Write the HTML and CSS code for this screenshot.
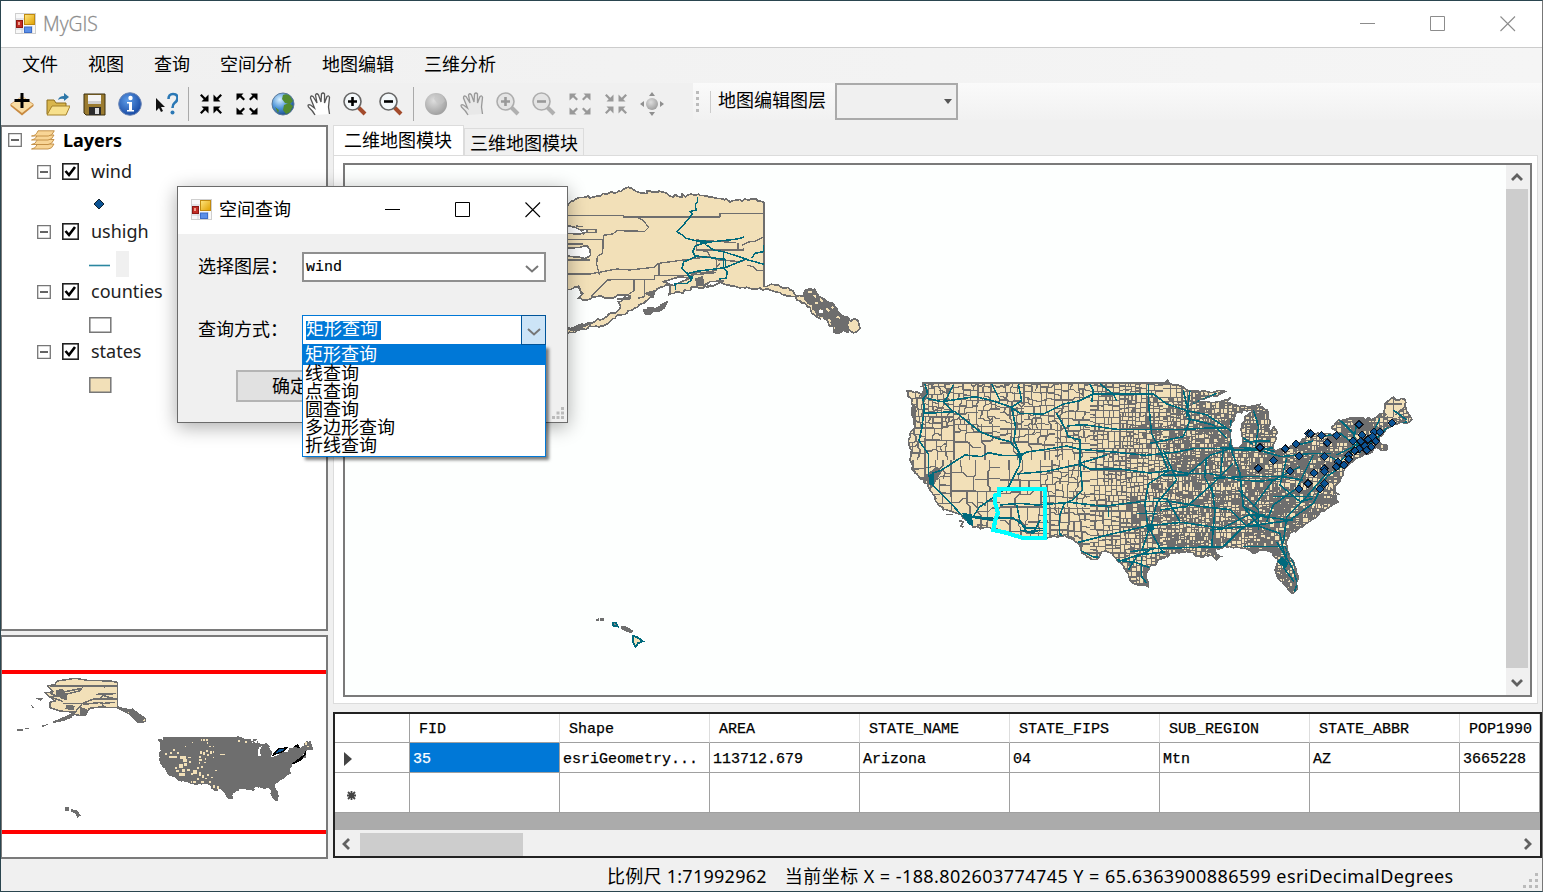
FILE: index.html
```html
<!DOCTYPE html>
<html lang="zh">
<head>
<meta charset="utf-8">
<title>MyGIS</title>
<link rel="stylesheet" href="styles.css">
</head>
<body>
<svg class="defs" width="0" height="0" aria-hidden="true">
  <defs>
    <linearGradient id="yel" x1="0" y1="0" x2="1" y2="1"><stop offset="0" stop-color="#ffe680"/><stop offset="1" stop-color="#e0a000"/></linearGradient>
    <radialGradient id="blue" cx=".4" cy=".35" r=".7"><stop offset="0" stop-color="#5c9ce8"/><stop offset="1" stop-color="#1546a0"/></radialGradient>
    <radialGradient id="sea" cx=".35" cy=".3" r=".8"><stop offset="0" stop-color="#d8f0ff"/><stop offset=".5" stop-color="#4d94d8"/><stop offset="1" stop-color="#123c78"/></radialGradient>
    <radialGradient id="grayball" cx=".4" cy=".35" r=".7"><stop offset="0" stop-color="#dedede"/><stop offset="1" stop-color="#9c9c9c"/></radialGradient>
    <symbol id="i-app" viewBox="0 0 21 21"><rect x=".5" y=".5" width="20" height="20" fill="#f8f8f8" stroke="#cfcfcf"/><path d="M1 6h8M7 15v5M17 13v7M1 16h8" stroke="#d0d0d8"/><rect x="9.500" y="1.500" width="10" height="10" fill="url(#yel)" stroke="#c08a10"/><rect x="1.500" y="7.500" width="6" height="7" fill="#c22d25" stroke="#8d1813"/><rect x="3" y="9" width="2" height="3" fill="#f0a090"/><rect x="9.500" y="14" width="7" height="5.500" fill="#5b8fe8" stroke="#3d6dc8"/></symbol>
    <symbol id="i-add" viewBox="0 0 24 24"><path d="M.5 12L12 4L23.500 12V14L12 23.500L.5 14Z" fill="#c88a40"/><path d="M1 12.500L12 4L23 12.500L12 21Z" fill="#f8dca4"/><path d="M12 1v15M4.500 8.500h15" stroke="#000" stroke-width="3"/></symbol>
    <symbol id="i-open" viewBox="0 0 24 24"><path d="M1 22V8h7l2 3h10v11z" fill="#d9b64c" stroke="#8c6c1c"/><path d="M1 23L6 14H24L20 23z" fill="#f7e08c" stroke="#a5822b"/><path d="M12 8q1-4 6-4V1l5 4-5 4V7q-3-1-6 1z" fill="#2d77a8"/></symbol>
    <symbol id="i-save" viewBox="0 0 24 24"><path d="M2 2h21v21H4l-2-2z" fill="#9a7b30" stroke="#3c300f"/><rect x="6" y="3" width="13" height="9" fill="#f4f4f4"/><path d="M6 9h13v3H6z" fill="#d0d0d0"/><rect x="7" y="15" width="12" height="8" fill="#2c2c2c"/><rect x="13" y="16" width="4" height="6" fill="#ddd"/></symbol>
    <symbol id="i-info" viewBox="0 0 24 24"><circle cx="12" cy="12" r="11.300" fill="url(#blue)" stroke="#6c86b5"/><circle cx="12.500" cy="6" r="2.200" fill="#fff"/><path d="M9 10h5v8h2v1.500H9V18h2v-6.500H9z" fill="#fff"/></symbol>
    <symbol id="i-help" viewBox="0 0 24 24"><path d="M2 6v13l3-3 2 4 2-1-2-4h4z" fill="#111"/><path d="M14.500 7q0-5 4.500-5t4.500 4q0 3-3 5-2 1.500-2 5" fill="none" stroke="#2b78b5" stroke-width="2.600"/><circle cx="18.500" cy="20.500" r="2" fill="#2b78b5"/></symbol>
    <symbol id="i-in" viewBox="0 0 24 24"><path d="M9.500 2.500v7h-7l2.200-2.200L1 3.600 2.600 2l3.700 3.700zM14.500 2.500v7h7l-2.200-2.200L23 3.600 21.400 2l-3.700 3.700zM9.500 21.500v-7h-7l2.200 2.200L1 20.400 2.600 22l3.700-3.700zM14.500 21.500v-7h7l-2.200 2.200L23 20.400 21.400 22l-3.700-3.700z" fill="currentColor"/></symbol>
    <symbol id="i-out" viewBox="0 0 24 24"><path d="M1.500 1.500h7L6.500 3.500 10 7 8.500 8.500 5 5.200 1.500 8.500zM22.500 1.500h-7l2 2L14 7l1.500 1.500L19 5.200 22.500 8.500zM1.500 22.500h7l-2-2L10 17l-1.500-1.500L5 18.800 1.500 15.500zM22.500 22.500h-7l2-2L14 17l1.500-1.500L19 18.800 22.500 15.500z" fill="currentColor"/></symbol>
    <symbol id="i-globe" viewBox="0 0 24 24"><circle cx="12" cy="12" r="11" fill="url(#sea)" stroke="#5a7898"/><path d="M12 3q4-2 7 1l3 5-3 3-5-1-3-4zM13 13l5-2 4 3-3 6-4 2-3-4zM4 15l4 3-1 3z" fill="#528b2e"/></symbol>
    <symbol id="i-globeg" viewBox="0 0 24 24"><circle cx="12" cy="12" r="11" fill="url(#grayball)"/><path d="M12 3q4-2 7 1l2 5-3 3-5-1-3-4z" fill="#c4c4c4" opacity=".6"/></symbol>
    <symbol id="i-hand" viewBox="0 0 24 24"><path d="M8 23Q6 19 1.500 15q-1.500-3 2-2l4 3L3.500 6q0-3 2.500-1.500L10 11 8.500 3q1-2.500 3 0L14 10l.5-8q1.500-2 3 0L17.500 11 20 4.500q2-1.500 2.500 1L21.500 15l1 7" fill="var(--palm)" stroke="currentColor" stroke-width="1.300"/></symbol>
    <symbol id="i-plus" viewBox="0 0 24 24"><path d="M15 15l7 7" stroke="var(--handle)" stroke-width="4"/><circle cx="9.500" cy="9.500" r="8.500" fill="var(--lens)" stroke="var(--rim)" stroke-width="1.600"/><path d="M9.500 5v9M5 9.500h9" stroke="currentColor" stroke-width="2.600"/></symbol>
    <symbol id="i-minus" viewBox="0 0 24 24"><path d="M15 15l7 7" stroke="var(--handle)" stroke-width="4"/><circle cx="9.500" cy="9.500" r="8.500" fill="var(--lens)" stroke="var(--rim)" stroke-width="1.600"/><path d="M5 9.500h9" stroke="currentColor" stroke-width="2.600"/></symbol>
    <symbol id="i-pan" viewBox="0 0 24 24"><circle cx="12" cy="12" r="6" fill="url(#grayball)"/><path d="M12 0l3 4H9zM12 24l3-4H9zM0 12l4-3v6zM24 12l-4-3v6z" fill="#8f8f8f"/></symbol>
    <symbol id="i-layers" viewBox="0 0 24 20"><g stroke="#c08a40" stroke-width=".9" fill="#f8d596"><path d="M.5 19q4 0 6-5h16.500q-2 5-6 5z"/><path d="M.5 14.500q4 0 6-5h16.500q-2 5-6 5z"/><path d="M.5 10q4 0 6-5h16.500q-2 5-6 5z"/><path d="M.5 6Q5 6 7 .8h16.300q-2 5.200-6 5.200z"/></g></symbol>
    <symbol id="i-box" viewBox="0 0 14 14"><path d="M.7.700h12.600v12.600H.700z" fill="#fff" stroke="#777" stroke-width="1.300"/><path d="M3 7h8" stroke="#222" stroke-width="1.400"/></symbol>
    <symbol id="i-check" viewBox="0 0 17 17"><rect x=".8" y=".8" width="15.400" height="15.400" fill="#fff" stroke="#222" stroke-width="1.600"/><path d="M3.500 8l3.500 4 6-8" fill="none" stroke="#000" stroke-width="2.600"/></symbol>
    <symbol id="i-min" viewBox="0 0 16 16"><path d="M0 7.500h15" stroke="currentColor"/></symbol>
    <symbol id="i-max" viewBox="0 0 16 16"><path d="M.5.500h14v14H.500z" fill="none" stroke="currentColor"/></symbol>
    <symbol id="i-close" viewBox="0 0 16 16"><path d="M.5.500l14.500 14.500M15 .5L.5 15" stroke="currentColor" stroke-width="1.100"/></symbol>
    <symbol id="i-down" viewBox="0 0 14 8"><path d="M1 1l6 5.500L13 1" fill="none" stroke="currentColor" stroke-width="2"/></symbol>
    <symbol id="i-arrow" viewBox="0 0 14 8"><path d="M2 1l5 5 5-5" fill="none" stroke="currentColor" stroke-width="2.800"/></symbol>
    <g id="w"><path d="M-14 0L0-14L14 0L0 14Z" fill="#0b0f18"/><path d="M-10 0L0-10L10 0L0 10Z" fill="#0b5394"/></g>
    <path id="usa" d="M98 40 L825 40 832 30 838 40 870 48 895 62 930 65 975 66 1005 65 985 75 940 88 900 102 930 96 960 97 1000 92 1022 82 1012 98 1040 106 1085 108 1110 103 1106 112 1132 120 1134 128 1100 124 1085 122 1060 120 1035 134 1024 158 1020 190 1022 222 1030 234 1045 235 1060 215 1053 180 1064 148 1080 128 1105 124 1133 132 1140 152 1134 172 1142 184 1152 168 1162 190 1158 208 1148 226 1150 240 1190 236 1220 222 1248 205 1250 190 1300 194 1342 192 1325 172 1345 150 1380 144 1450 147 1480 130 1486 100 1510 82 1518 90 1545 88 1548 115 1565 148 1550 160 1532 155 1505 168 1484 185 1468 200 1472 222 1490 224 1492 238 1476 242 1458 232 1440 250 1400 265 1374 286 1360 305 1350 335 1335 350 1338 380 1345 395 1320 410 1290 428 1260 454 1225 477 1197 495 1188 520 1196 550 1214 582 1225 625 1220 660 1205 670 1190 650 1165 625 1155 600 1160 585 1165 570 1140 545 1110 540 1090 550 1065 535 1020 530 975 535 978 550 990 560 980 570 965 556 930 560 890 545 850 550 820 565 780 590 770 612 774 650 735 642 720 630 710 605 685 575 665 550 635 545 625 565 605 568 575 550 570 525 540 505 525 497 485 500 405 508 315 478 250 472 240 460 215 435 185 425 160 420 130 375 115 350 75 310 60 270 65 240 55 210 60 190 75 170 68 140 65 100 50 62 80 66 98 74Z"/>
    <clipPath id="usclip"><use href="#usa"/></clipPath>
  </defs>
</svg>

<div class="window">
  <header class="titlebar">
    <svg class="app"><use href="#i-app"/></svg><span class="apptitle">MyGIS</span>
    <div class="controls"><svg><use href="#i-min"/></svg><svg><use href="#i-max"/></svg><svg><use href="#i-close"/></svg></div>
  </header>
  <nav class="menu"><span>文件</span><span>视图</span><span>查询</span><span>空间分析</span><span>地图编辑</span><span>三维分析</span></nav>
  <div class="toolbar">
    <div class="tools">
      <svg><use href="#i-add"/></svg><svg><use href="#i-open"/></svg><svg><use href="#i-save"/></svg><svg><use href="#i-info"/></svg><svg><use href="#i-help"/></svg>
      <i class="sep"></i>
      <svg><use href="#i-in"/></svg><svg><use href="#i-out"/></svg><svg><use href="#i-globe"/></svg><svg class="handc"><use href="#i-hand"/></svg><svg><use href="#i-plus"/></svg><svg><use href="#i-minus"/></svg>
      <i class="sep"></i>
      <span class="off"><svg><use href="#i-globeg"/></svg><svg><use href="#i-hand"/></svg><svg><use href="#i-plus"/></svg><svg><use href="#i-minus"/></svg><svg><use href="#i-out"/></svg><svg><use href="#i-in"/></svg><svg><use href="#i-pan"/></svg></span>
    </div>
    <div class="editbar"><span class="grip"></span><i class="sep small"></i><span class="editlabel">地图编辑图层</span><div class="flatcombo"><svg width="8" height="5"><path d="M0 0h8L4 5z" fill="#555"/></svg></div></div>
  </div>

  <main class="main">
    <section class="left">
      <div class="tree">
        <div class="row root"><svg class="exp"><use href="#i-box"/></svg><svg class="lay"><use href="#i-layers"/></svg><b>Layers</b></div>
        <div class="row"><svg class="exp"><use href="#i-box"/></svg><svg class="chk"><use href="#i-check"/></svg><span>wind</span></div>
        <div class="sym"><svg width="40" height="26"><path d="M5 13l5-5 5 5-5 5z" fill="#0b5394" stroke="#10202c"/></svg></div>
        <div class="row"><svg class="exp"><use href="#i-box"/></svg><svg class="chk"><use href="#i-check"/></svg><span>ushigh</span></div>
        <div class="sym"><svg width="42" height="26"><path d="M0 14.500h21" stroke="#2b87a0" stroke-width="1.600"/><path d="M27 0h13v26H27z" fill="#f0f0f0"/></svg></div>
        <div class="row"><svg class="exp"><use href="#i-box"/></svg><svg class="chk"><use href="#i-check"/></svg><span>counties</span></div>
        <div class="sym"><svg width="40" height="26"><path d="M.8 6.800h21v14.500H.800z" fill="#fff" stroke="#777" stroke-width="1.500"/></svg></div>
        <div class="row"><svg class="exp"><use href="#i-box"/></svg><svg class="chk"><use href="#i-check"/></svg><span>states</span></div>
        <div class="sym"><svg width="40" height="26"><path d="M.8 6.800h21v14.500H.800z" fill="#f2e0b8" stroke="#777" stroke-width="1.500"/></svg></div>
      </div>
      <div class="overview">
        <svg width="324" height="220" viewBox="6 36 972 660" shape-rendering="crispEdges">
          <g fill="#f2e0b8" stroke="#6e6e6e" stroke-width="4.500">
            <path d="M144 183L165 178L172 168L225 160L262 166L330 168L353 172V246L375 252L392 254L410 266L436 280V290L415 292L390 268L350 248L300 246L268 250L258 268L240 272L225 268L190 286L160 292L205 272L228 262L180 258L150 248L150 232L165 228L142 210L136 204L160 200Z"/>
            <path d="M150 183H353M170 205L245 190L238 198L195 208M190 236H245L280 222H350M288 208L348 206M312 208L300 222M300 236L345 232M305 180L315 186M150 204L170 214L150 215L190 230M310 212L340 220M250 238L305 232L310 246M245 238L225 262" fill="none"/>
          </g>
          <path d="M385 256L398 250L434 278L428 290H412L386 266ZM355 246L385 256L382 262L352 250ZM160 288L205 274L218 278L160 295ZM124 302L148 296L128 307ZM52 313H70V318H52ZM76 308H88V313H76ZM102 218H132L122 227ZM94 241L102 248L98 250ZM240 245L265 255L258 274L240 270ZM168 195L188 192L200 210V225L185 222L168 208ZM200 240L225 242L220 256L195 252ZM196 547H206V557H196ZM212 552L232 557L242 572L232 578L226 566L212 560Z" fill="#6e6e6e"/>
          <g transform="translate(461 325) scale(.305 .3016)"><use href="#usa" fill="#6e6e6e" stroke="#6e6e6e" stroke-width="12"/></g>
          <path d="M773 374h7v14h-7zM752 343h8v6h-8zM764 347h6v6h-6z" fill="#fff"/>
          <path d="M819 390L836 371L859 369L848 380ZM884 365L892 360L897 366ZM878 417L896 403L916 388L918 380L904 404L884 413Z" fill="#0b5394" stroke="#000" stroke-width="4"/>
          <g id="ovdots" fill="#f2e0b8"></g>
          <path d="M6 140h972M6 621h972" stroke="#f00" stroke-width="13"/>
        </svg>
      </div>
    </section>

    <section class="right">
      <div class="tabs"><div class="tab active">二维地图模块</div><div class="tab">三维地图模块</div></div>
      <div class="page">
        <div class="mapbox">
          <svg class="map" width="1161" height="530" viewBox="345 165 1161 530" shape-rendering="crispEdges">
            <g transform="translate(560 170) scale(.33333)" stroke-linejoin="round">
              <path id="alaska" d="M-60 150 L20 110 35 92 75 82 110 78 130 70 165 70 190 58 205 52 230 65 315 68 330 78 420 76 450 82 520 92 580 88 612 98 612 350 655 345 690 360 710 378 735 375 745 358 765 365 800 395 820 400 840 430 855 445 895 455 900 475 885 487 855 475 830 490 800 450 770 440 735 400 700 380 660 368 620 356 530 350 495 343 480 335 460 343 440 340 430 355 405 352 380 362 325 375 330 345 310 350 290 358 275 380 250 400 205 422 165 445 145 460 100 470 20 492 -20 500 20 480 80 460 140 440 180 415 175 395 210 385 190 375 150 385 110 380 80 390 55 385 70 370 45 350 20 358Z" fill="#f2e0b8" stroke="#6e6e6e" stroke-width="5"/>
              <path d="M20 166L45 172L62 180L82 178V186L60 192L20 190ZM20 235L60 232L80 226L90 240L92 256L75 266L60 262L20 258ZM310 335L360 320L390 325L360 337L340 347ZM430 350L450 335L490 333L460 348Z" fill="#fff" stroke="#6e6e6e" stroke-width="5"/>
              <path d="M82 178H108V188H82M48 168L70 170M62 180L72 195M20 136h170v5h290v-10h132M232 142l18 10 16 20-12 12-82-2-14 10-28 4-2 55-16 8-2 24 8 32M20 208h110M20 222h50M20 270h70M20 312h70l80-15 40 3 72-8 14-12 150-20M297 282v34l-14 0v12h-95l-46 2-50 50M222 330v32l-36 24M253 330v50l-20 5M297 316l70 2 100-10M409 206v34h20l60 0 45-2v-18M545 226l20-10 20-2 28-14M409 210l120 8M470 265v35l-60 15M440 240l10 20 25 10 70 5 15-10M490 240h60v-5M560 285l20 5 10 12h22M440 245l-20-5M390 310l70-5 20-25M170 375l40 2 0 10h-40M55 345l10 30" fill="none" stroke="#6e6e6e" stroke-width="4"/>
              <path d="M412 80v15l-6 10 2 15-18 5 8 6-16 20-12 14-20 20 20 12 8 8 40 10 24 2 90-10 20-6M436 218l-30 10-8 18 8 12 90 10 0 25-80 10-35 8-15-15 5-20 45-20M380 305l15 25-15 10h-35l2 20M440 225l20 15 30 5 68 22-60 25M558 268l54 15M575 265l10-15 25-5v-20M490 245v50l12 10-4 20-22 2" fill="none" stroke="#006a7d" stroke-width="4.500"/>
              <path d="M412 210l34 2-8 14zM380 315l20 5-6 14z" fill="#006a7d"/>
              <path id="panhandle" d="M735 360 L760 358 790 385 812 398 837 430 865 448 868 480 828 490 816 450 780 440 758 405 735 390Z" fill="#6e6e6e" stroke="#6e6e6e" stroke-width="4"/>
              <path id="kodiak" d="M250 420 L290 412 322 394 314 412 268 434Z" fill="#6e6e6e" stroke="#6e6e6e" stroke-width="4"/>
              <path d="M405 325L430 318L432 348L410 350ZM250 370L290 358L280 384ZM20 478L60 462L100 460L40 485ZM430 350L455 342L445 355Z" fill="#6e6e6e"/>
              <path d="M760 375l8 6M780 385l8 12M800 415l8 8M780 420l6 4M830 440l10 4M865 465h20M765 400h8M815 410l5 5M745 366h10M880 475h8" stroke="#f2e0b8" stroke-width="6"/>
              <path d="M776 425h12M782 448h6" stroke="#fff" stroke-width="8"/>
            </g>
            <g transform="translate(890 370) scale(.33333)">
              <use href="#usa" fill="#f2e0b8"/>
              <g clip-path="url(#usclip)">
                <path id="blots" fill="#6e6e6e"/>
                <path id="mesh" fill="none" stroke="#6e6e6e" stroke-width="3.800"/>
                <path d="M1485 80h60v30l-14 5-6 30-30-5-12-15z" fill="#f2e0b8"/>
                <path d="M1485 102l50 0M1510 82v60M1545 110l-30 25" stroke="#6e6e6e" stroke-width="4" fill="none"/>
                <path d="M90 50h22v30l-12 22-8-22zM65 100l14 10-2 60-12-20zM100 320l40-30 15 15-30 50zM760 585h15v60h-15z" fill="#6e6e6e"/>
              </g>
              <use href="#usa" fill="none" stroke="#6e6e6e" stroke-width="5"/>
              <path d="M168 434h20M208 452l12 4-8 12 8 4M132 382l8 4M90 50h8M985 70l20-8M1478 226l14 2-2 12M1325 330l8 20M1334 365l14 10M1000 560h-20" fill="none" stroke="#6e6e6e" stroke-width="5"/>
              <g fill="none" stroke="#006a7d" stroke-width="4.800" clip-path="url(#usclip)">
                <path d="M105 42l8 30-14 15 4 30-8 60-8 35 28 40 0 60 10 30 50 50 60 65 20 40h55"/>
                <path d="M110 85l45 10 100-15 45 10 60 20 30 20 70 2 60-30 50-10 40-20 180 0 40 30 60 20 60 12 60 40 50 30 30 20"/>
                <path d="M105 130l90-5 25 20 50 40 50 20 40 10 30 35M190 45l-20 40-10 10 30 30M305 42l25 50M385 42l10 50-30 20 12 60-5 40 20 45-4 30-30 60-90 65-20 30 70 10"/>
                <path d="M125 310l30-10 70-45 50 5 20-12 40 8h60l15-10 60-8 60-10 40 10 100 8 100 10 90-10 50-10 60 0 80-4 70 6 60-10 50-5 40-10"/>
                <path d="M500 130l25 45 10 25 35 10v70l8 80-30 30-25 10-15 40 0 50 40 40 60 30 60 8 70 10 40 15 60 0"/>
                <path d="M380 312l90-8 100-22 30 15 90 0 90 12 60-8 60 10 60 0 90 20 60 2 60-5"/>
                <path d="M530 168l50-4 100 14h200l80-4 50 0M570 280l80-25M600 42l10 20-5 35M630 42l40 30 10 20M775 42v50l10 100 30 60 20 50-60 40-10 60 10 80-20 60"/>
                <path d="M330 405l60-5 50 5 100-8 100 12 120-15 80 0 90 15 90 10 50 50 40 0M250 440l60 5 60 -1 40 30 60 2M380 405l10 50 20 30 60-5M565 517l100-25 110-25 100-10 120 18 80-40 50 0"/>
                <path d="M780 220l100-20 20-50-20-90M890 145l80 20 40 40M900 60l-10 80M910 100l70-30M820 240l40 90-60 70-20 80 40 70M1022 235l-60 20-70 60-80 0M1020 230l30 80 10 100 50 60 60 20 15 70"/>
                <path d="M1160 515l30 50 20 35 12 40-8 25M1024 240l80 0 70 20 90-10 60 0M1024 150l-4 90M1090 120l16 50-10 60 60 15M1040 215l100-2"/>
                <path d="M965 350l10 70-10 110M1030 280l-60 60-80 70-80 10M970 325l90-5 120 0 60 10M1060 410l60 30 80 10 70-50 40-80M1045 360l60 60 0 60M1110 440l-60 40-50 50-200 5-80 10M960 480l100-10 150-20M1130 455l20-50 70-50 50-100M1190 265l-20 80 60 50 40-10M1230 290l-80 40-60 80M1180 520l10-80 60-60 60-70M1190 545l-8 50 30 40"/>
                <path d="M1060 530h125l30 60M990 325l10-90M1150 380l120 0M950 260l-6 60 30 60M790 385l40 0 40 70"/>
                <path d="M1340 285l50-50 60-20 40-40 60-20M1380 270l20-110M1410 250l-20-60-40-40M1340 255l100-50 30-60M1510 120l40 30M1320 260l60 30M1310 320l60-40M1290 200l60-10 80 60"/>
                <path d="M685 575l60-20 80-10M715 600l25-40 40-20M755 560v60l15 20M740 430l60 0M390 480l40 10 20-40M655 410v30"/>
              </g>
              <path d="M215 428l30 5 5 35-15-5zM115 315l18-5 0 35-14 0zM380 250l20 0-8 30zM1160 575l15-15 20 20-8 15zM1020 220l14 18-10 8zM765 465l20-5 10 16-15 10zM1090 435l25 0-10 15z" fill="#006a7d"/>
              <g id="winds"></g>
              <path d="M328 356H465V505H402L347 488L310 480L316 450L324 428L316 402V376L328 374Z" fill="none" stroke="#0ff" stroke-width="12.500"/>
            </g>
            <g transform="translate(580 600) scale(.33333)"><path d="M45 60l12-6v8h-8zM60 53h12v9H60z" fill="#6e6e6e"/><path d="M98 68h10l6 12-14-2z" fill="#888" stroke="#006a7d" stroke-width="5"/><path d="M122 78l14 0 24 14-6 8-16-6-16-8z" fill="#6e6e6e"/><path d="M160 108l12 4 16 12-14 6-8 10-8-16z" fill="#f2e0b8" stroke="#006a7d" stroke-width="6"/></g>
          </svg>
          <div class="vscroll"><svg class="up" width="14" height="8"><use href="#i-arrow"/></svg><div class="thumb"></div><svg width="14" height="8"><use href="#i-arrow"/></svg></div>
        </div>
      </div>
      <div class="gridbox">
        <div class="cells">
          <div class="rh hd"></div><div class="hd">FID</div><div class="hd">Shape</div><div class="hd">AREA</div><div class="hd">STATE_NAME</div><div class="hd">STATE_FIPS</div><div class="hd">SUB_REGION</div><div class="hd">STATE_ABBR</div><div class="hd">POP1990</div>
          <div class="rh"><svg width="8" height="14"><path d="M0 0l8 7-8 7z" fill="#444"/></svg></div><div class="sel">35</div><div>esriGeometry...</div><div>113712.679</div><div>Arizona</div><div>04</div><div>Mtn</div><div>AZ</div><div>3665228</div>
          <div class="rh star"><svg width="9" height="9"><path d="M4.500 0v9M0 4.500h9M1 1l7 7M8 1L1 8" stroke="#444" stroke-width="1.800"/></svg></div><div></div><div></div><div></div><div></div><div></div><div></div><div></div><div></div>
        </div>
        <div class="hscroll"><svg class="lt" width="14" height="8"><use href="#i-arrow"/></svg><div class="thumb"></div><svg class="rt" width="14" height="8"><use href="#i-arrow"/></svg></div>
      </div>
    </section>
  </main>
  <footer class="status"><span class="scale">比例尺 1:71992962</span><span class="coord">当前坐标 X = -188.802603774745 Y = 65.6363900886599 esriDecimalDegrees</span>
    <svg class="sizer" width="15" height="15"><path d="M12 0h3v3h-3zM6 6h3v3H6zM12 6h3v3h-3zM0 12h3v3H0zM6 12h3v3H6zM12 12h3v3h-3z" fill="#bbb"/></svg></footer>
</div>

<div class="dialog">
  <header><svg class="app"><use href="#i-app"/></svg><span>空间查询</span><div class="controls"><svg><use href="#i-min"/></svg><svg><use href="#i-max"/></svg><svg><use href="#i-close"/></svg></div></header>
  <div class="body">
    <div class="field"><label>选择图层：</label><div class="combo"><span>wind</span><i class="arrow"><svg width="14" height="8"><use href="#i-down"/></svg></i></div></div>
    <div class="field"><label>查询方式：</label><div class="combo open"><span><mark>矩形查询</mark></span><i class="arrow"><svg width="14" height="8"><use href="#i-down"/></svg></i>
      <ul class="list"><li class="on">矩形查询</li><li>线查询</li><li>点查询</li><li>圆查询</li><li>多边形查询</li><li>折线查询</li></ul></div></div>
    <div class="btn">确定</div>
  </div>
  <svg class="sizer" width="12" height="12"><path d="M9 0h3v3H9zM4.500 4.500h3v3h-3zM9 4.500h3v3H9zM0 9h3v3H0zM4.500 9h3v3h-3zM9 9h3v3H9z" fill="#bbb"/></svg>
</div>
<script src="map.js"></script>
</body>
</html>
```
FILE: styles.css
```css
* { box-sizing: border-box; }
body { margin: 0; width: 1543px; height: 892px; overflow: hidden; background: #f0f0f0; color: #000; font: 18px/24px "Noto Sans", "Noto Sans CJK SC", sans-serif; }
.defs { position: absolute; }
svg { display: block; flex: none; }
.window { width: 1543px; height: 892px; border: 1px solid #2a454f; border-right-color: #777; display: flex; flex-direction: column; }
.titlebar { height: 47px; background: #fff; border-bottom: 1px solid #ccc; display: flex; align-items: center; padding: 0 26px 1px 14px; color: #8c8c8c; }
.app { width: 21px; height: 21px; }
.apptitle { margin-left: 7px; font: 300 19.300px/24px "Open Sans", sans-serif; -webkit-text-stroke: .3px #8c8c8c; }
.controls { margin-left: auto; display: flex; }
.controls svg { width: 16px; height: 16px; }
.titlebar .controls { gap: 54px; }
.menu { height: 35px; display: flex; gap: 30px; padding: 3px 0 0 21px; background: linear-gradient(90deg, #f0f0f0, #f5f5f5); font-family: "Noto Sans CJK SC", sans-serif; }
.toolbar { height: 42px; display: flex; background: #f0f0f0; }
.tools { width: 692px; padding-left: 9px; display: flex; align-items: center; gap: 12px; flex: none; }
.tools svg { width: 24px; height: 24px; color: #000; --palm: #fff; --handle: #a34b2c; --lens: #f4f8fa; --rim: #666; }
.tools .handc { color: #555; }
.off { display: flex; gap: 12px; }
.tools .off svg { color: #999; --palm: #e8e8e8; --handle: #b0b0b0; --lens: #e4e4e4; --rim: #adadad; }
.sep { width: 1px; height: 34px; background: #aaa; margin: 0 -2px; }
.editbar { display: flex; align-items: center; height: 37px; flex: 1; background: linear-gradient(#fafafa, #f1f1f1); font-family: "Noto Sans CJK SC", sans-serif; }
.editlabel { height: 29px; }
.grip { width: 3px; height: 22px; margin-left: 3px; background: repeating-linear-gradient(#bbb 0 3px, transparent 3px 6px); }
.sep.small { height: 22px; margin: 0 7px 0 11px; background: #ccc; }
.flatcombo { width: 123px; height: 37px; margin-left: 9px; border: 2px solid #aaa; background: #f0f0f0; display: flex; align-items: center; justify-content: flex-end; padding-right: 4px; }
.main { height: 734px; display: flex; gap: 5px; }
.left { width: 327px; display: flex; flex-direction: column; gap: 4px; }
.tree { height: 506px; border: 2px solid #7a7a7a; border-left-width: 1px; background: #fff; }
.row { height: 30px; display: flex; align-items: center; padding-left: 36px; color: #222; }
.row.root { padding-left: 6px; height: 29px; padding-bottom: 3px; color: #000; }
.exp { width: 14px; height: 14px; }
.row:not(.root) .exp { margin: 1px -1px 0 -1px; }
.lay { width: 24px; height: 20px; margin: 0 8px 0 9px; }
.chk { width: 17px; height: 17px; margin: 1px 12px 0 12px; }
.sym { height: 30px; padding: 5px 0 0 87px; }
.overview { height: 224px; border: 2px solid #7a7a7a; border-left-width: 1px; background: #fff; }
.right { width: 1209px; display: flex; flex-direction: column; }
.tabs { display: flex; align-items: flex-end; height: 30px; font-family: "Noto Sans CJK SC", sans-serif; }
.tab { height: 27px; width: 120px; border: 1px solid #dcdcdc; border-bottom: 0; padding: 1px 0 0 5px; }
.tab.active { height: 30px; width: 131px; background: #fff; padding: 1px 0 0 10px; }
.page { height: 549px; width: 1205px; background: #fff; border: 1px solid #dcdcdc; padding: 7px 6px 7px 9px; }
.mapbox { height: 534px; width: 1189px; border: 2px solid #7a7a7a; background: #fdfffe; display: flex; }
.vscroll { width: 24px; background: #f0f0f0; color: #606060; display: flex; flex-direction: column; align-items: center; padding: 8px 2px 8px 0; }
.up { transform: rotate(180deg); }
.vscroll .thumb { width: 22px; height: 479px; margin: 8px 0 11px; background: #cdcdcd; }
.gridbox { margin-top: 8px; height: 146px; border: 2px solid #222; background: #ababab; font: 15px/18px "Liberation Mono", monospace; overflow: hidden; }
.cells { display: grid; grid-template: 29px 30px 40px / 75px repeat(7, 150px) 80px; height: 99px; overflow: hidden; }
.cells > div { background: #fff; border: solid #a0a0a0; border-width: 0 1px 1px 0; padding: 8px 0 0 3px; overflow: hidden; white-space: nowrap; -webkit-text-stroke: .25px; }
.cells > .hd { padding: 7px 0 0 9px; border-right-color: #ddd; }
.cells > .rh { border-right-color: #a0a0a0; padding: 9px 0 0 9px; }
.cells > .star { padding: 18px 0 0 12px; }
.cells > .sel { background: #0078d7; color: #fff; }
.hscroll { height: 26px; margin-top: 17px; background: #f0f0f0; display: flex; align-items: center; color: #606060; padding: 2px 0 0 4px; }
.hscroll .thumb { width: 163px; height: 23px; background: #cdcdcd; margin-left: 7px; }
.lt { transform: rotate(90deg); }
.rt { transform: rotate(-90deg); margin: 0 5px 0 auto; }
.status { height: 32px; display: flex; padding: 5px 4px 0 606px; white-space: nowrap; letter-spacing: .26px; }
.coord { margin-left: 18px; letter-spacing: .44px; }
.status .sizer { margin: 9px 0 0 auto; }

.dialog { position: absolute; left: 177px; top: 186px; width: 391px; height: 237px; border: 1px solid #6b6b6b; background: #f0f0f0; box-shadow: 0 4px 18px rgba(0,0,0,.33); font-family: "Noto Sans CJK SC", sans-serif; }
.dialog header { height: 47px; background: #fff; display: flex; align-items: center; padding: 0 26px 2px 13px; }
.dialog header span { margin-left: 7px; height: 28px; }
.dialog .controls { gap: 54px; }
.body { padding: 18px 0 0 20px; }
.field { display: flex; align-items: center; height: 30px; margin-bottom: 33px; }
.field label { width: 104px; height: 28px; }
.combo { position: relative; width: 244px; height: 30px; border: 2px solid #8f8f8f; background: #fff; display: flex; font: 15px/18px "Liberation Mono", "Noto Sans CJK SC", monospace; }
.combo > span { flex: 1; padding: 5px 0 0 2px; -webkit-text-stroke: .2px; }
.arrow { width: 25px; display: flex; align-items: center; justify-content: center; color: #777; padding-top: 3px; }
.combo.open { border: 1px solid #0078d7; }
.open .arrow { background: #cce4f7; border: 1px solid #005499; margin: -1px; }
.combo.open > span { padding: 5px 0 0 3px; }
mark { background: #0078d7; color: #fff; font-size: 18px; line-height: 19px; width: 75px; display: inline-block; -webkit-text-stroke: 0; }
.list { position: absolute; left: -1px; top: 29px; width: 244px; height: 112px; margin: 0; padding: 0; list-style: none; background: #fff; border: 1px solid #0078d7; border-top-width: 0; box-shadow: 3px 3px 3px rgba(0,0,0,.5); font-size: 18px; }
.list li { height: 18px; line-height: 22px; padding-left: 2px; }
.list .on { background: #0078d7; color: #fff; height: 20px; padding-top: 0; margin-bottom: -1px; }
.btn { width: 108px; height: 32px; margin: -8px 0 0 38px; border: 2px solid #b4b4b4; background: #e1e1e1; text-align: center; line-height: 27px; }
.dialog .sizer { position: absolute; right: 3px; bottom: 3px; }
```
FILE: map.js
```js
// Deterministic generator so the county mesh is stable between loads.
let seed = 77;
function rnd() { seed = (seed * 1103515245 + 12345) % 2147483648; return seed / 2147483648; }

// Adds coastal detail to a polygon; long straight borders are kept as they are.
function roughen(id, amp, keep) {
  const el = document.getElementById(id);
  const n = el.getAttribute('d').match(/-?\d+/g).map(Number);
  const pts = [];
  for (let i = 0; i < n.length; i += 2) pts.push([n[i], n[i + 1]]);
  let d = '';
  pts.forEach((p, i) => {
    const q = pts[(i + 1) % pts.length];
    d += (i ? 'L' : 'M') + p;
    const len = Math.hypot(q[0] - p[0], q[1] - p[1]);
    if (len > keep) return;
    const steps = Math.floor(len / 8);
    for (let k = 1; k < steps; k++) {
      const t = k / steps;
      d += `L${(p[0] + (q[0] - p[0]) * t + (rnd() - 0.5) * amp).toFixed(1)},${(p[1] + (q[1] - p[1]) * t + (rnd() - 0.5) * amp).toFixed(1)}`;
    }
  });
  el.setAttribute('d', d + 'Z');
}
roughen('usa', 8, 300);
roughen('alaska', 10, 200);
roughen('panhandle', 14, 200);
roughen('kodiak', 12, 200);

let mesh = '', blots = '';

// Average county size at a position, in map units.
function target(x, y) {
  if (x < 180) return y < 180 ? 18 : 26;
  if (x < 440) return y < 200 ? 20 : 40;
  if (x < 600) return 22;
  if (x < 700) return 17;
  if (x < 800) return 13.5;
  return y < 110 && x < 1020 ? 15 : 10.5;
}

function split(x, y, w, h) {
  const t = target(x + w / 2, y + h / 2) * (0.75 + rnd() * 0.6);
  if (w < t * 1.4 && h < t * 1.4) {
    const gray = x > 1080 ? 0.42 : x > 820 ? 0.26 : x > 700 ? 0.08 : 0;
    if (rnd() < gray) blots += `M${x} ${y}h${w}v${h}h${-w}z`;
    return;
  }
  const k = 0.38 + rnd() * 0.24;
  const j = x < 600 ? (rnd() - 0.5) * t * 0.7 : (rnd() - 0.5) * 3;
  if (w > h) {
    const c = Math.round(w * k);
    mesh += `M${x + c} ${y}v${h / 2}l${j} ${Math.abs(j)}V${y + h}`;
    split(x, y, c, h); split(x + c, y, w - c, h);
  } else {
    const c = Math.round(h * k);
    mesh += `M${x} ${y + c}h${w / 2}l${Math.abs(j)} ${j}H${x + w}`;
    split(x, y, w, c); split(x, y + c, w, h - c);
  }
}
for (const [x, y, w, h] of [[40, 30, 290, 240], [40, 270, 290, 220], [330, 30, 270, 240], [330, 270, 270, 310], [600, 30, 220, 640], [820, 30, 380, 320], [820, 350, 420, 330], [1200, 70, 380, 280], [1240, 350, 140, 120]]) split(x, y, w, h);
document.getElementById('mesh').setAttribute('d', mesh);
document.getElementById('blots').setAttribute('d', blots);

const winds = [[330,233],[325,295],[370,272],[406,237],[438,223],[447,259],[420,304],[476,191],[482,192],[514,197],[532,219],[559,197],[523,260],[523,297],[523,305],[492,309],[474,341],[447,358],[523,341],[510,358],[627,164],[636,196],[609,214],[632,214],[654,209],[672,187],[690,187],[726,160],[677,214],[663,232],[645,228],[627,237],[614,243],[596,256],[596,268],[582,286],[564,277],[559,291],[650,241],[668,200]];
document.getElementById('winds').innerHTML = winds.map(([x, y]) => `<use href="#w" x="${x + 780}" y="${y}"/>`).join('');

const dots = [[510,380,7,6],[520,373,6,6],[530,380,6,8],[508,393,24,5],[495,385,5,4],[540,394,18,8],[548,402,14,10],[552,414,10,8],[564,395,10,5],[566,407,8,8],[538,418,12,12],[546,432,10,10],[526,425,6,6],[528,436,8,5],[538,444,18,8],[560,432,10,5],[578,435,12,12],[572,445,6,6],[592,425,6,6],[596,440,6,12],[606,450,6,8],[590,458,8,6],[580,468,8,5],[604,468,8,6],[620,448,6,5],[634,455,6,5],[616,458,6,5],[626,468,6,5],[600,378,6,8],[610,382,6,8],[618,374,6,6],[598,392,6,6],[620,388,6,6],[630,378,5,10],[598,402,8,6],[596,412,5,5],[638,378,4,5],[660,386,14,4],[638,395,4,5],[612,410,5,5],[602,343,4,4],[610,343,4,4],[618,343,5,5],[620,352,4,4],[626,362,6,5],[638,363,4,4],[576,350,4,4],[554,362,4,4],[646,434,5,5],[640,480,6,8],[650,484,6,8],[714,345,5,5],[735,347,5,6],[916,352,5,8],[922,362,5,5],[604,424,4,4],[572,468,4,5],[614,400,4,4]];
document.getElementById('ovdots').innerHTML = dots.map(([x, y, w, h]) => `<rect x="${x}" y="${y}" width="${w}" height="${h}"/>`).join('');
```
